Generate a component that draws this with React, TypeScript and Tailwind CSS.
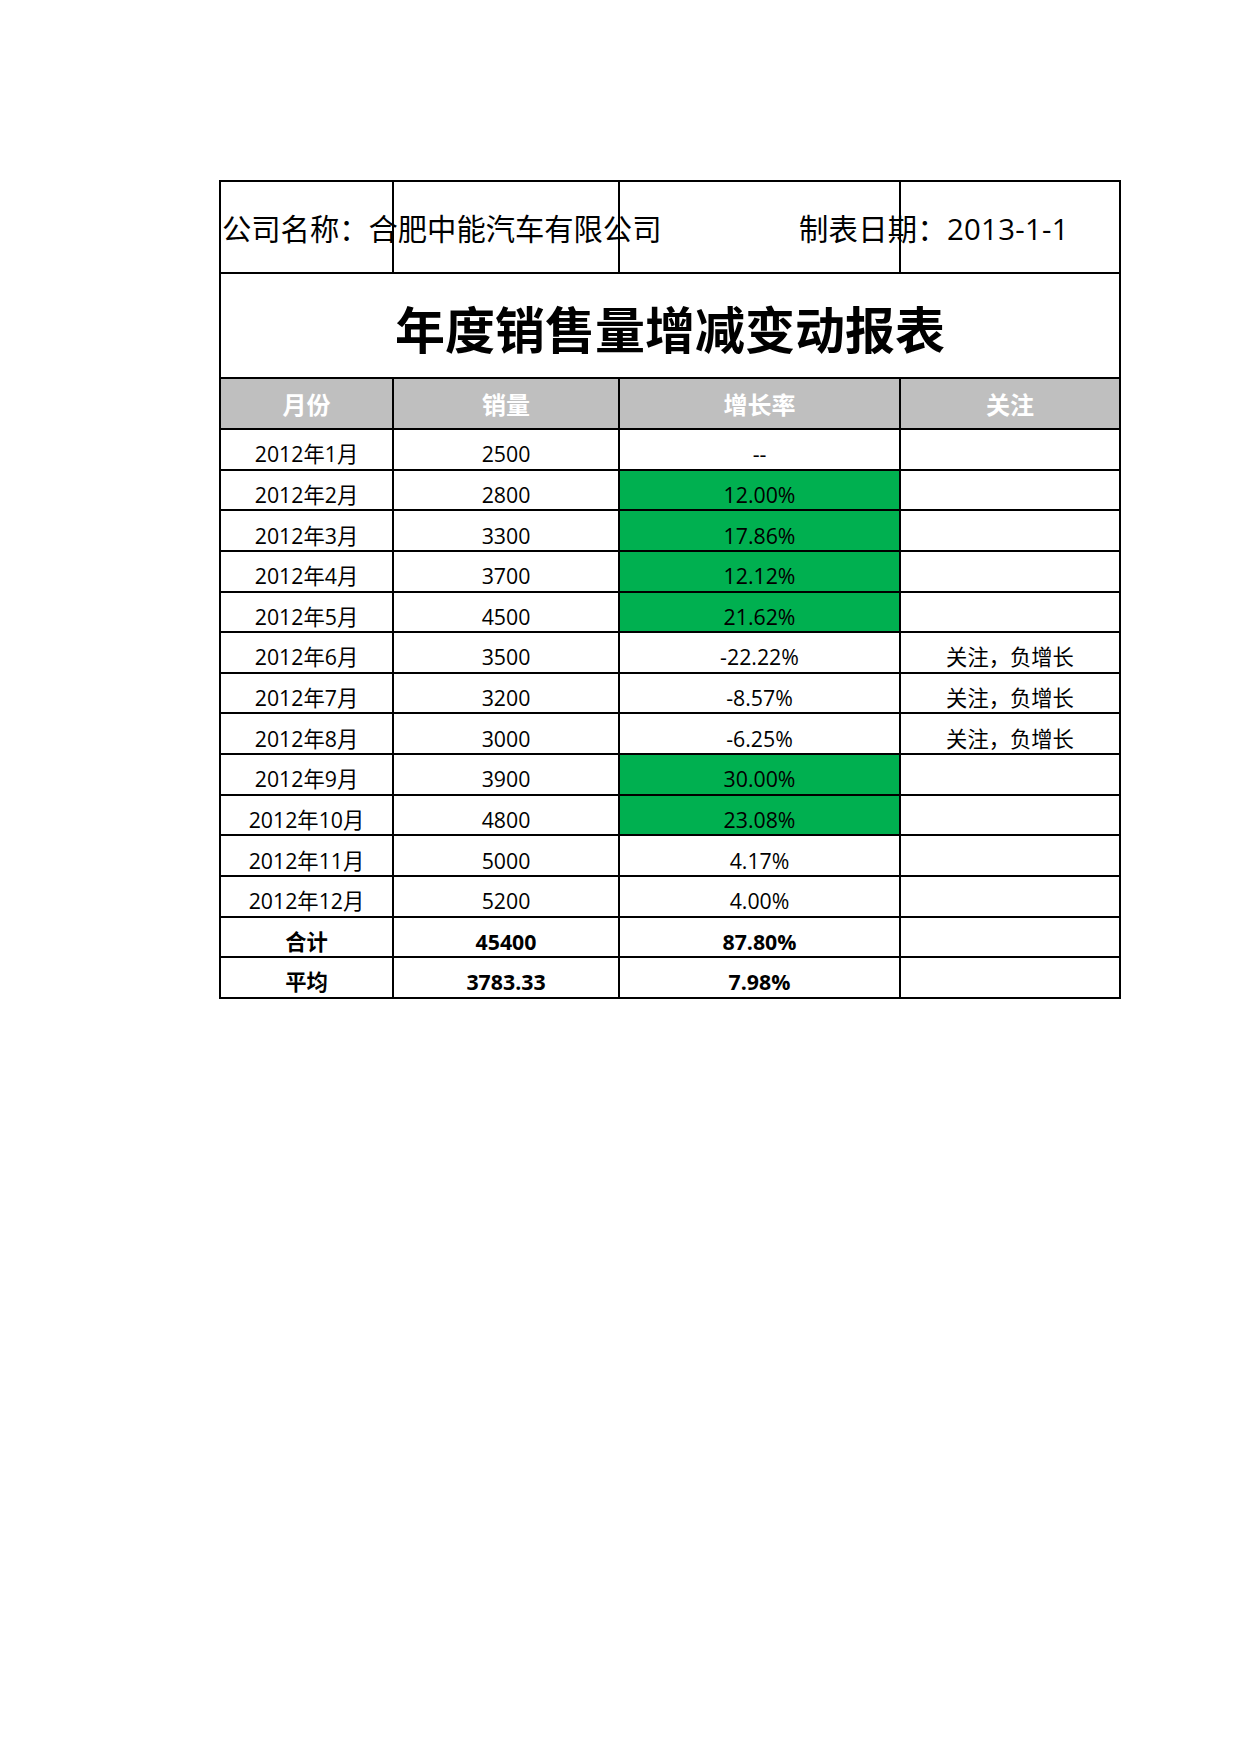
import React from "react";

type Row = { m: string; s: string; r: string; g?: boolean; n?: string; b?: boolean };

const rows: Row[] = [
  { m: "2012年1月", s: "2500", r: "--" },
  { m: "2012年2月", s: "2800", r: "12.00%", g: true },
  { m: "2012年3月", s: "3300", r: "17.86%", g: true },
  { m: "2012年4月", s: "3700", r: "12.12%", g: true },
  { m: "2012年5月", s: "4500", r: "21.62%", g: true },
  { m: "2012年6月", s: "3500", r: "-22.22%", n: "关注，负增长" },
  { m: "2012年7月", s: "3200", r: "-8.57%", n: "关注，负增长" },
  { m: "2012年8月", s: "3000", r: "-6.25%", n: "关注，负增长" },
  { m: "2012年9月", s: "3900", r: "30.00%", g: true },
  { m: "2012年10月", s: "4800", r: "23.08%", g: true },
  { m: "2012年11月", s: "5000", r: "4.17%" },
  { m: "2012年12月", s: "5200", r: "4.00%" },
  { m: "合计", s: "45400", r: "87.80%", b: true },
  { m: "平均", s: "3783.33", r: "7.98%", b: true },
];

const cell =
  "border-r-2 border-b-2 border-black flex items-end justify-center pb-[4px] leading-none text-[21.3px] h-[40.64px]";

export default function App() {
  return (
    <div className="w-[1240px] min-h-[1754px] bg-white text-black font-['Open_Sans','Noto_Sans_CJK_SC',sans-serif]">
      <div className="pt-[180px] pl-[219px]">
        <div className="w-[902px] border-l-2 border-t-2 border-black grid grid-cols-[173px_226px_281px_220px]">
          {/* company row */}
          <div className="h-[92px] border-r-2 border-b-2 border-black flex items-center pl-[1px] pt-[6px] text-[29.3px] whitespace-nowrap overflow-visible">
            <span>公司名称：合肥中能汽车有限公司</span>
          </div>
          <div className="h-[92px] border-r-2 border-b-2 border-black" />
          <div className="h-[92px] border-r-2 border-b-2 border-black flex items-center pl-[179px] pt-[6px] text-[29.3px] whitespace-nowrap overflow-visible">
            <span className="tracking-[0.3px]">制表日期：2013-1-1</span>
          </div>
          <div className="h-[92px] border-r-2 border-b-2 border-black" />

          {/* title */}
          <div className="col-span-4 h-[105px] border-r-2 border-b-2 border-black flex items-center justify-center pt-[8px]">
            <span className="text-[50px] font-bold leading-none">年度销售量增减变动报表</span>
          </div>

          {/* header */}
          {["月份", "销量", "增长率", "关注"].map((h) => (
            <div
              key={h}
              className="h-[51px] bg-[#bfbfbf] border-r-2 border-b-2 border-black flex items-center justify-center text-white font-bold text-[24px] leading-none pt-[2px]"
            >
              {h}
            </div>
          ))}

          {rows.map((r) => (
            <React.Fragment key={r.m}>
              <div className={`${cell} ${r.b ? "font-bold" : ""}`}>{r.m}</div>
              <div className={`${cell} ${r.b ? "font-bold" : ""}`}>{r.s}</div>
              <div className={`${cell} ${r.b ? "font-bold" : ""} ${r.g ? "bg-[#00b050]" : ""}`}>{r.r}</div>
              <div className={cell}>{r.n ?? ""}</div>
            </React.Fragment>
          ))}
        </div>
      </div>
    </div>
  );
}
